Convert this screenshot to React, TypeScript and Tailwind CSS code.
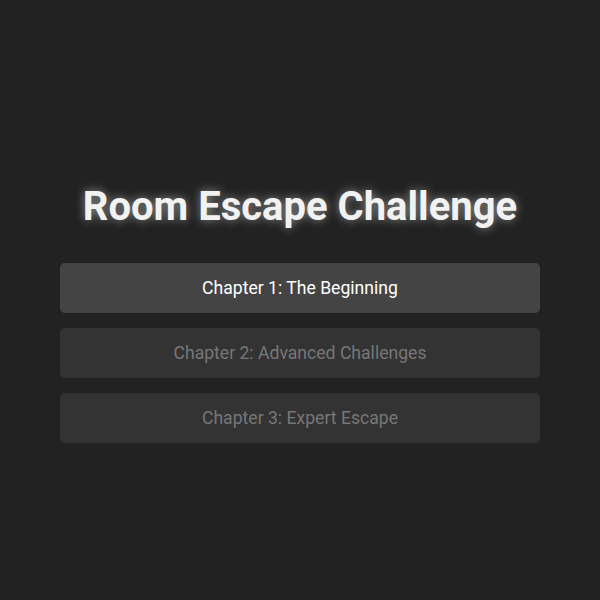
const chapters = [
  { id: 1, title: "Chapter 1: The Beginning", unlocked: true },
  { id: 2, title: "Chapter 2: Advanced Challenges", unlocked: false },
  { id: 3, title: "Chapter 3: Expert Escape", unlocked: false },
];

export default function App() {
  return (
    <div
      className="min-h-screen w-full bg-[#222222] flex flex-col items-center pt-[183px]"
      style={{ fontFamily: "Roboto, 'Noto Sans', sans-serif" }}
    >
      <h1 className="text-[40px] leading-[48px] font-bold text-[#f2f2f2] mb-[32px] [text-shadow:0_0_10px_rgba(255,255,255,0.5)]">
        Room Escape Challenge
      </h1>
      <div className="w-[480px] flex flex-col gap-[15px]">
        {chapters.map((c) => (
          <button
            key={c.id}
            disabled={!c.unlocked}
            className={
              c.unlocked
                ? "h-[50px] w-full rounded-[5px] bg-[#444444] text-white text-[17.6px]"
                : "h-[50px] w-full rounded-[5px] bg-[#333333] text-[#777777] text-[17.6px]"
            }
          >
            {c.title}
          </button>
        ))}
      </div>
    </div>
  );
}
